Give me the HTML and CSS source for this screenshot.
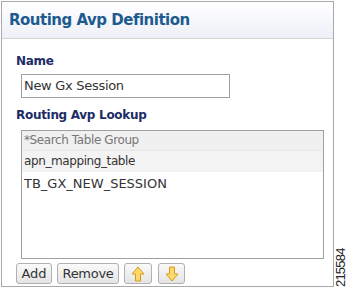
FILE: index.html
```html
<!DOCTYPE html>
<html>
<head>
<meta charset="utf-8">
<link rel="stylesheet" href="styles.css">
</head>
<body>
<div class="page">
  <div class="panel">
    <div class="header">Routing Avp Definition</div>
    <div class="body">
      <div class="label">Name</div>
      <div class="input">New Gx Session</div>
      <div class="label label2">Routing Avp Lookup</div>
      <div class="list">
        <div class="row row-head">*Search Table Group</div>
        <div class="row row-sel">apn_mapping_table</div>
        <div class="row row-upper">TB_GX_NEW_SESSION</div>
      </div>
      <div class="buttons">
        <button class="btn btn-add">Add</button>
        <button class="btn btn-remove">Remove</button>
        <button class="btn icon-btn" aria-label="Move up">
          <svg width="14" height="16" viewBox="0 0 14 16"><path d="M7 1 L13 8 L9.5 8 L9.5 15 L4.5 15 L4.5 8 L1 8 Z" fill="#fcd96a" stroke="#d89a1c" stroke-width="1" stroke-linejoin="round"/></svg>
        </button>
        <button class="btn icon-btn icon-btn2" aria-label="Move down">
          <svg width="14" height="16" viewBox="0 0 14 16"><path d="M7 15 L13 8 L9.5 8 L9.5 1 L4.5 1 L4.5 8 L1 8 Z" fill="#fcd96a" stroke="#d89a1c" stroke-width="1" stroke-linejoin="round"/></svg>
        </button>
      </div>
    </div>
  </div>
  <div class="side"><span class="fig">215584</span></div>
</div>
</body>
</html>
```
FILE: styles.css
```css
html, body {
  margin: 0;
  padding: 0;
  background: #fff;
}
body {
  font-family: "DejaVu Sans", Verdana, sans-serif;
}
.page {
  display: flex;
  width: 347px;
  height: 288px;
  padding: 1px 0 0 1px;
  box-sizing: border-box;
}
.panel {
  width: 333px;
  height: 286px;
  border: 1px solid #a9a9a9;
  box-sizing: border-box;
  display: flex;
  flex-direction: column;
}
.header {
  height: 37px;
  box-sizing: border-box;
  border-bottom: 1px solid #d4d4d4;
  background: linear-gradient(#ffffff, #eef0f8);
  color: #1d5b8e;
  font-weight: bold;
  font-size: 15px;
  padding: 9px 0 0 7px;
  letter-spacing: -0.5px;
}
.body {
  padding: 15px 0 0 14px;
  display: flex;
  flex-direction: column;
}
.label {
  color: #1c2c66;
  font-weight: bold;
  font-size: 12px;
  height: 15px;
  line-height: 15px;
  letter-spacing: -0.3px;
}
.label2 {
  margin-top: 10px;
}
.input {
  margin: 5px 0 0 5px;
  width: 209px;
  height: 24px;
  box-sizing: border-box;
  border: 1px solid #a0a0a0;
  font-size: 13px;
  line-height: 22px;
  padding-left: 2px;
  color: #333;
  letter-spacing: -0.3px;
}
.list {
  margin: 7px 0 0 5px;
  width: 303px;
  height: 129px;
  box-sizing: border-box;
  border: 1px solid #a0a0a0;
  display: flex;
  flex-direction: column;
}
.row {
  font-size: 12px;
  letter-spacing: -0.4px;
  color: #333;
  padding-left: 2px;
  height: 24px;
  line-height: 24px;
}
.row-head {
  height: 19px;
  line-height: 18px;
  color: #777;
  background: #f0f0f0;
  border-bottom: 1px solid #e6e6e6;
}
.row-sel {
  height: 21px;
  line-height: 21px;
  background: #f3f3f3;
}
.row-upper {
  font-size: 13px;
  letter-spacing: 0;
}
.buttons {
  display: flex;
  gap: 5px;
  margin-top: 4px;
}
.btn {
  height: 21px;
  box-sizing: border-box;
  border: 1px solid #b0b0b0;
  border-radius: 3px;
  background: linear-gradient(#fafafa, #e4e4e4);
  font-family: "DejaVu Sans", Verdana, sans-serif;
  font-size: 13px;
  color: #333;
  padding: 0;
  margin: 0;
  display: flex;
  align-items: center;
  justify-content: center;
}
.btn-add {
  width: 36px;
}
.btn-remove {
  width: 62px;
  letter-spacing: -0.3px;
}
.icon-btn {
  width: 28px;
}
.icon-btn2 {
  margin-left: 1px;
  width: 27px;
}
.side {
  flex: 1;
  position: relative;
}
.fig {
  position: absolute;
  left: 1px;
  bottom: 1px;
  transform-origin: left bottom;
  transform: rotate(-90deg) translate(0, 100%);
  font-family: "Liberation Sans", Arial, sans-serif;
  font-size: 13px;
  letter-spacing: -0.8px;
  color: #222;
  white-space: nowrap;
  line-height: 12px;
}
```
